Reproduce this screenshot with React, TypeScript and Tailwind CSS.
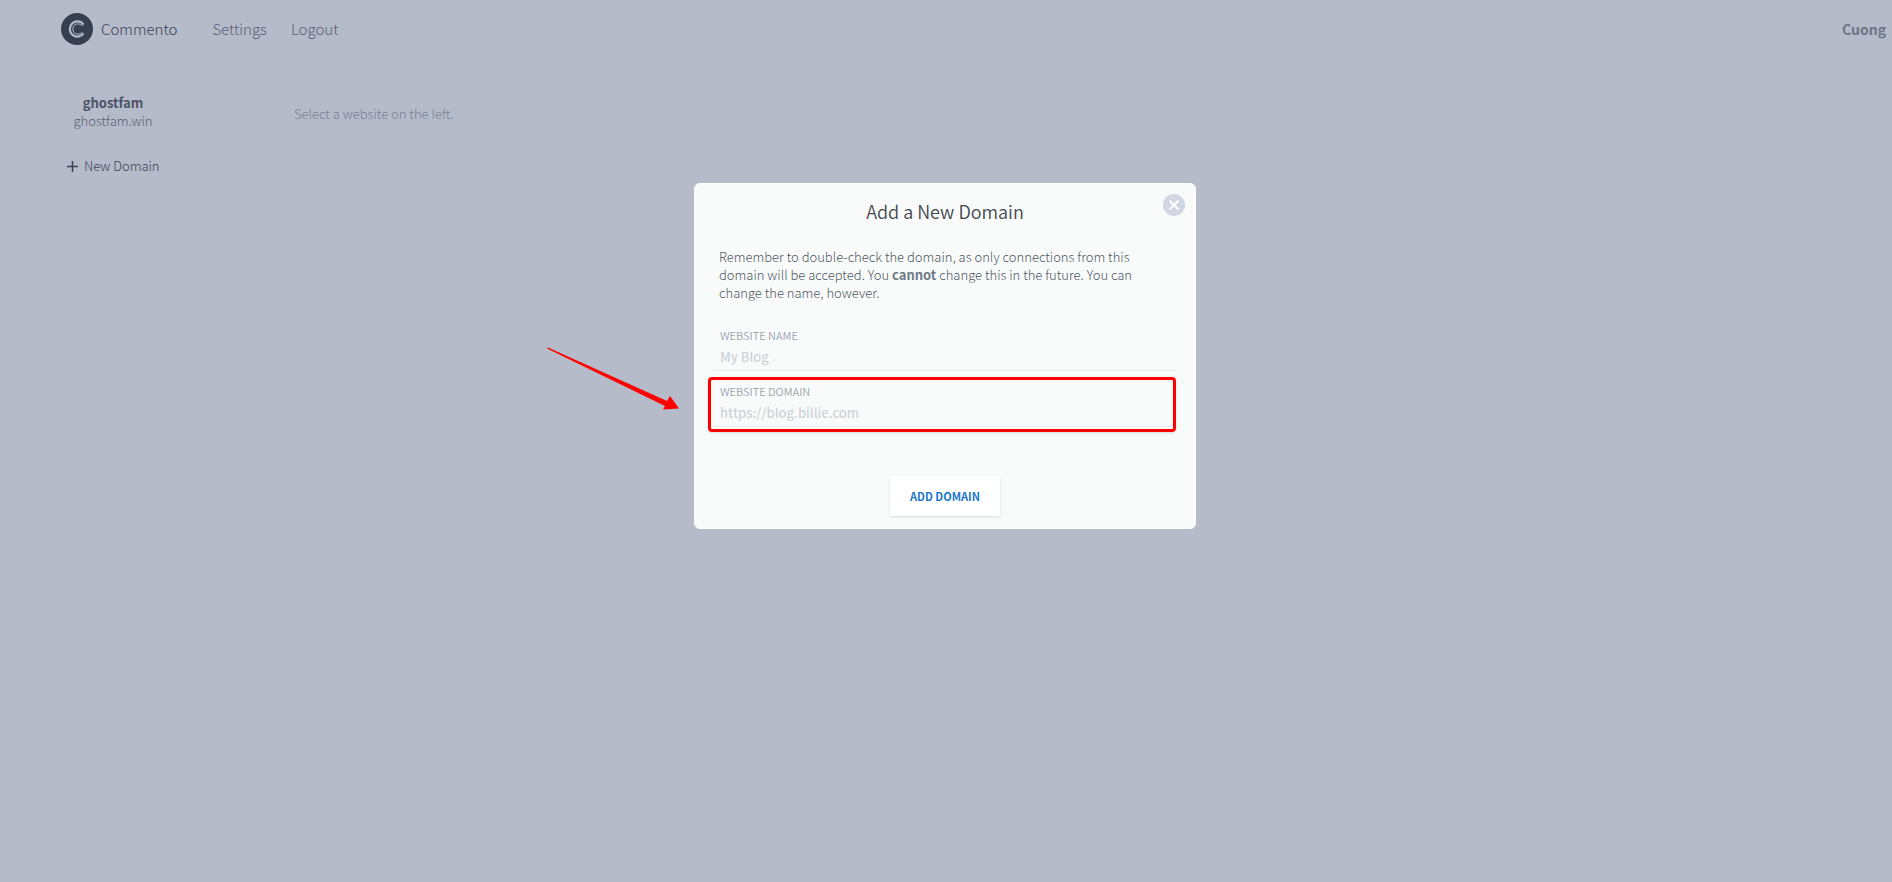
import type { ReactNode } from 'react'

// ── Text field used in the dialog ────────────────────────────────────────────
function Field({ id, label, placeholder }: { id: string; label: string; placeholder: string }) {
  return (
    <div className="flex h-14 flex-col border-b border-[#e9ecef] px-[7px] pt-3">
      <label htmlFor={id} className="text-[11px] leading-4 font-[350] text-[#98a5b0] uppercase">
        {label}
      </label>
      <input
        id={id}
        type="text"
        placeholder={placeholder}
        className="mt-1 h-5 w-full bg-transparent text-[13px] leading-5 font-medium text-gray-700 outline-none placeholder:text-[#ced4da]"
      />
    </div>
  )
}

function NavLink({ children }: { children: ReactNode }) {
  return (
    <a href="#" className="text-[#596174]">
      {children}
    </a>
  )
}

function Logo() {
  return (
    <svg width="32" height="32" viewBox="0 0 32 32" fill="none" aria-hidden="true">
      <circle cx="16" cy="16" r="16" fill="#363f4f" />
      <path d="M22.6 11.6A7.6 7.6 0 1 0 22.6 20.4" stroke="#b4bac9" strokeWidth="2.2" />
      <path d="M21.4 13.2A5.2 5.2 0 1 0 21.4 18.8" stroke="#b4bac9" strokeWidth="1" />
    </svg>
  )
}

// ── Pointer that sits over the page ──────────────────────────────────────────
function Arrow() {
  return (
    <svg className="absolute -top-6 right-full mr-[34px]" width="132" height="64" viewBox="0 0 132 64" aria-hidden="true">
      <path d="M0 1.5L1 0.5L120 54L123 49L132 61.5L116 62.5L118 59Z" fill="#f00" />
    </svg>
  )
}

export default function App() {
  return (
    <div className="relative flex min-h-screen flex-col bg-[#b5bbc9] font-['Noto_Sans_CJK_SC','Noto_Sans',sans-serif]">
      <header className="flex h-[58px] items-center pr-[6px] pl-[61px] text-[15px] leading-5 font-light">
        <a href="#" className="flex items-center gap-2 text-[#3a4155]">
          <Logo />
          Commento
        </a>
        <nav className="ml-[35px] flex gap-6">
          <NavLink>Settings</NavLink>
          <NavLink>Logout</NavLink>
        </nav>
        <span className="ml-auto text-sm font-bold text-[#6d7587]">Cuong</span>
      </header>

      <div className="flex flex-1 text-[13px] leading-[18px] font-light">
        <aside className="w-[234px] border-r border-dotted border-[#b0b6c4] pt-9 pl-[61px]">
          <a href="#" className="flex w-[104px] flex-col items-center text-[#596174]">
            <strong className="font-bold text-[#4c5367]">ghostfam</strong>
            ghostfam.win
          </a>
          <button className="mt-[27px] ml-[6px] flex items-center gap-[6px] text-[#3a4155]">
            <svg width="11" height="11" viewBox="0 0 11 11" stroke="currentColor" strokeWidth="1.5" aria-hidden="true">
              <path d="M5.5 0V11M0 5.5H11" />
            </svg>
            New Domain
          </button>
        </aside>
        <main className="pt-[47px] pl-[60px] text-[#788092]">Select a website on the left.</main>
      </div>

      {/* Dialog */}
      <div className="absolute inset-x-0 top-[183px] flex justify-center pr-0.5">
        <section
          role="dialog"
          aria-labelledby="dialog-title"
          className="relative w-[502px] rounded-md border border-white bg-[#f9fbfb] px-[18px] pt-[15px] pb-3"
        >
          <button aria-label="Close" className="absolute top-[10px] right-[10px]">
            <svg width="22" height="22" viewBox="0 0 22 22" aria-hidden="true">
              <circle cx="11" cy="11" r="11" fill="#d1d6e3" />
              <path d="M6.5 6.5L15.5 15.5M15.5 6.5L6.5 15.5" stroke="#fff" strokeWidth="2" />
            </svg>
          </button>

          <h1 id="dialog-title" className="text-center text-lg leading-6 font-[350] text-[#43474d]">
            Add a New Domain
          </h1>

          <p className="mt-[25px] px-[6px] text-[13px] leading-[18px] font-light text-[#4c5762]">
            Remember to double-check the domain, as only connections from this domain will be accepted. You{' '}
            <strong className="font-bold text-[#6f7a85]">cannot</strong> change this in the future. You can change the
            name, however.
          </p>

          <form className="mt-[13px] flex flex-col items-center">
            <div className="w-full">
              <Field id="name" label="Website name" placeholder="My Blog" />
              <div className="relative">
                <Field id="domain" label="Website domain" placeholder="https://blog.billie.com" />
                <div className="pointer-events-none absolute top-[6px] right-px -bottom-[5px] -left-[5px] rounded border-[3px] border-[#f00] shadow-sm" />
                <Arrow />
              </div>
            </div>
            <button
              type="button"
              className="mt-[49px] h-10 rounded-xs bg-white px-5 text-[11px] leading-4 font-bold text-[#1976cc] uppercase shadow"
            >
              Add Domain
            </button>
          </form>
        </section>
      </div>
    </div>
  )
}
